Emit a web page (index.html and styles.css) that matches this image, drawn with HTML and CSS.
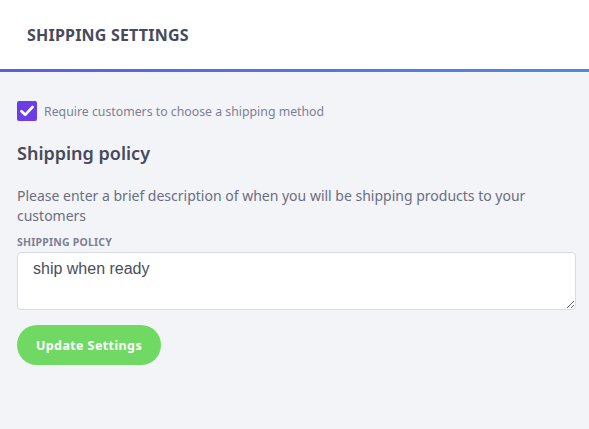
FILE: index.html
```html
<!DOCTYPE html>
<html>
<head>
<meta charset="utf-8">
<link rel="stylesheet" href="styles.css">
</head>
<body>
<header class="header">
  <h1 class="title">SHIPPING SETTINGS</h1>
</header>
<main class="content">
  <label class="check-row">
    <span class="checkbox">
      <svg width="14" height="12" viewBox="0 0 14 12"><path d="M1.5 6.2 L5.2 9.8 L12.5 2" fill="none" stroke="#fff" stroke-width="2.6" stroke-linecap="round" stroke-linejoin="round"/></svg>
    </span>
    <span class="check-text">Require customers to choose a shipping method</span>
  </label>
  <h2 class="subtitle">Shipping policy</h2>
  <p class="desc">Please enter a brief description of when you will be shipping products to your customers</p>
  <div class="field-label">SHIPPING POLICY</div>
  <textarea class="policy">ship when ready</textarea>
  <button class="btn">Update Settings</button>
</main>
</body>
</html>
```
FILE: styles.css
```css
html, body {
  margin: 0;
  padding: 0;
}
body {
  background: #f3f4f8;
  font-family: "Noto Sans", "Open Sans", sans-serif;
  color: #4a4d60;
  width: 589px;
  height: 429px;
  overflow: hidden;
}
.header {
  background: #fff;
  height: 69px;
  border-bottom: 3px solid transparent;
  border-image: linear-gradient(90deg, #5a5ee2, #4f8bdd) 1;
  box-sizing: content-box;
  display: flex;
  align-items: center;
  padding-left: 27px;
}
.title {
  margin: 0;
  font-size: 16px;
  font-weight: 700;
  color: #474a5c;
  letter-spacing: 0.2px;
  padding-top: 1px;
}
.content {
  padding: 29px 17px 0 17px;
}
.check-row {
  display: flex;
  align-items: center;
  gap: 7px;
}
.checkbox {
  width: 20px;
  height: 20px;
  background: #6a3de6;
  border-radius: 2px;
  display: flex;
  align-items: center;
  justify-content: center;
}
.check-text {
  font-size: 12.3px;
  color: #7d8092;
}
.subtitle {
  margin: 19px 0 0 0;
  font-size: 18px;
  font-weight: 600;
  color: #474a5c;
  line-height: 26px;
}
.desc {
  margin: 20px 0 0 0;
  font-size: 14px;
  line-height: 20px;
  color: #6b6e80;
}
.field-label {
  margin-top: 9px;
  font-size: 10.5px;
  font-weight: 700;
  color: #7d8092;
  letter-spacing: 0.2px;
  line-height: 14px;
}
.policy {
  display: block;
  margin-top: 3px;
  width: 559px;
  height: 58px;
  box-sizing: border-box;
  border: 1px solid #d9dbe2;
  border-radius: 4px;
  background: #fff;
  padding: 7px 15px;
  font-family: "Liberation Sans", Arial, sans-serif;
  font-size: 16px;
  color: #4a4d60;
  resize: vertical;
}
.btn {
  margin-top: 15px;
  height: 40px;
  width: 144px;
  border: none;
  border-radius: 20px;
  background: #6fd964;
  color: #fff;
  font-family: "Noto Sans", "Open Sans", sans-serif;
  font-size: 12.5px;
  font-weight: 700;
  letter-spacing: 0.4px;
}
```
